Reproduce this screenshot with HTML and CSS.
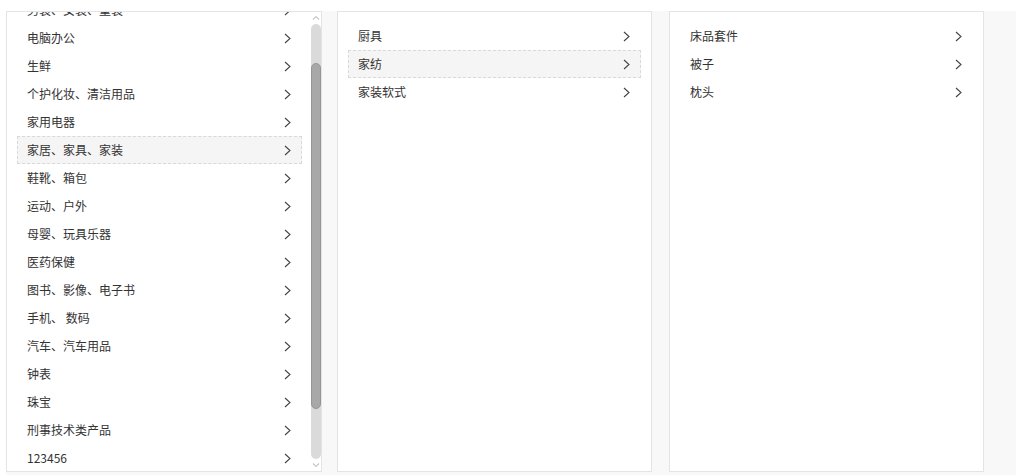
FILE: index.html
```html
<!DOCTYPE html>
<html lang="zh-CN">
<head>
<meta charset="utf-8">
<title>商品分类</title>
<link rel="stylesheet" href="styles.css">
</head>
<body>
<div class="cascader">
  <div class="panel panel-first">
    <ul class="cat-list cat-scroll">
      <li class="cat-item"><span>食品、饮料</span><svg class="arrow" viewBox="0 0 7 11"><polyline points="1,1 6,5.5 1,10"/></svg></li>
      <li class="cat-item"><span>男装、女装、童装</span><svg class="arrow" viewBox="0 0 7 11"><polyline points="1,1 6,5.5 1,10"/></svg></li>
      <li class="cat-item"><span>电脑办公</span><svg class="arrow" viewBox="0 0 7 11"><polyline points="1,1 6,5.5 1,10"/></svg></li>
      <li class="cat-item"><span>生鲜</span><svg class="arrow" viewBox="0 0 7 11"><polyline points="1,1 6,5.5 1,10"/></svg></li>
      <li class="cat-item"><span>个护化妆、清洁用品</span><svg class="arrow" viewBox="0 0 7 11"><polyline points="1,1 6,5.5 1,10"/></svg></li>
      <li class="cat-item"><span>家用电器</span><svg class="arrow" viewBox="0 0 7 11"><polyline points="1,1 6,5.5 1,10"/></svg></li>
      <li class="cat-item is-active"><span>家居、家具、家装</span><svg class="arrow" viewBox="0 0 7 11"><polyline points="1,1 6,5.5 1,10"/></svg></li>
      <li class="cat-item"><span>鞋靴、箱包</span><svg class="arrow" viewBox="0 0 7 11"><polyline points="1,1 6,5.5 1,10"/></svg></li>
      <li class="cat-item"><span>运动、户外</span><svg class="arrow" viewBox="0 0 7 11"><polyline points="1,1 6,5.5 1,10"/></svg></li>
      <li class="cat-item"><span>母婴、玩具乐器</span><svg class="arrow" viewBox="0 0 7 11"><polyline points="1,1 6,5.5 1,10"/></svg></li>
      <li class="cat-item"><span>医药保健</span><svg class="arrow" viewBox="0 0 7 11"><polyline points="1,1 6,5.5 1,10"/></svg></li>
      <li class="cat-item"><span>图书、影像、电子书</span><svg class="arrow" viewBox="0 0 7 11"><polyline points="1,1 6,5.5 1,10"/></svg></li>
      <li class="cat-item"><span>手机、 数码</span><svg class="arrow" viewBox="0 0 7 11"><polyline points="1,1 6,5.5 1,10"/></svg></li>
      <li class="cat-item"><span>汽车、汽车用品</span><svg class="arrow" viewBox="0 0 7 11"><polyline points="1,1 6,5.5 1,10"/></svg></li>
      <li class="cat-item"><span>钟表</span><svg class="arrow" viewBox="0 0 7 11"><polyline points="1,1 6,5.5 1,10"/></svg></li>
      <li class="cat-item"><span>珠宝</span><svg class="arrow" viewBox="0 0 7 11"><polyline points="1,1 6,5.5 1,10"/></svg></li>
      <li class="cat-item"><span>刑事技术类产品</span><svg class="arrow" viewBox="0 0 7 11"><polyline points="1,1 6,5.5 1,10"/></svg></li>
      <li class="cat-item"><span>123456</span><svg class="arrow" viewBox="0 0 7 11"><polyline points="1,1 6,5.5 1,10"/></svg></li>
      <li class="cat-item"><span>礼品箱包</span><svg class="arrow" viewBox="0 0 7 11"><polyline points="1,1 6,5.5 1,10"/></svg></li>
      <li class="cat-item"><span>酒类</span><svg class="arrow" viewBox="0 0 7 11"><polyline points="1,1 6,5.5 1,10"/></svg></li>
    </ul>
    <div class="scrollbar" aria-hidden="true">
      <svg class="sb-btn" viewBox="0 0 10 9"><polyline points="2,6 5,3 8,6"/></svg>
      <div class="sb-track"><div class="sb-thumb"></div></div>
      <svg class="sb-btn" viewBox="0 0 10 9"><polyline points="2,3 5,6 8,3"/></svg>
    </div>
  </div>

  <div class="panel panel-second">
    <ul class="cat-list">
      <li class="cat-item"><span>厨具</span><svg class="arrow" viewBox="0 0 7 11"><polyline points="1,1 6,5.5 1,10"/></svg></li>
      <li class="cat-item is-active"><span>家纺</span><svg class="arrow" viewBox="0 0 7 11"><polyline points="1,1 6,5.5 1,10"/></svg></li>
      <li class="cat-item"><span>家装软式</span><svg class="arrow" viewBox="0 0 7 11"><polyline points="1,1 6,5.5 1,10"/></svg></li>
    </ul>
  </div>

  <div class="panel panel-third">
    <ul class="cat-list">
      <li class="cat-item"><span>床品套件</span><svg class="arrow" viewBox="0 0 7 11"><polyline points="1,1 6,5.5 1,10"/></svg></li>
      <li class="cat-item"><span>被子</span><svg class="arrow" viewBox="0 0 7 11"><polyline points="1,1 6,5.5 1,10"/></svg></li>
      <li class="cat-item"><span>枕头</span><svg class="arrow" viewBox="0 0 7 11"><polyline points="1,1 6,5.5 1,10"/></svg></li>
    </ul>
  </div>
</div>
<script src="app.js"></script>
</body>
</html>
```

FILE: styles.css
```css
* {
  box-sizing: border-box;
}

html,
body {
  margin: 0;
  padding: 0;
  background: #fff;
}

body {
  font-family: "Noto Sans CJK SC", "Noto Sans", "Liberation Sans", sans-serif;
  font-size: 12px;
  color: #333;
  overflow: hidden;
}

.cascader {
  display: flex;
  align-items: flex-start;
  margin: 11px 0 0 6px;
  width: 1010px;
  height: 470px;
  background: #f8f8f8;
}

.panel {
  position: relative;
  height: 461px;
  background: #fff;
  border: 1px solid #e4e4e4;
}

.panel-first {
  width: 316px;
}

.panel-second {
  width: 315px;
  margin-left: 15px;
}

.panel-third {
  width: 315px;
  margin-left: 17px;
}

.cat-list {
  list-style: none;
  margin: 0;
  padding: 10px;
  height: 100%;
}

.cat-scroll {
  overflow-y: scroll;
  padding-right: 19px;
  scrollbar-width: none;
}

.cat-scroll::-webkit-scrollbar {
  display: none;
}

.cat-item {
  display: flex;
  align-items: center;
  justify-content: space-between;
  height: 28px;
  padding: 0 10px 0 9px;
  border: 1px dashed transparent;
  line-height: 26px;
  white-space: nowrap;
  cursor: pointer;
}

.cat-item.is-active {
  background: #f5f5f5;
  border-color: #d9d9d9;
}

.arrow {
  width: 7px;
  height: 11px;
  flex: none;
  fill: none;
  stroke: #444;
  stroke-width: 1.1;
}

/* slim custom scrollbar drawn over the list's right edge */
.scrollbar {
  position: absolute;
  top: 0;
  right: 0;
  bottom: 0;
  width: 10px;
  display: flex;
  flex-direction: column;
  align-items: stretch;
}

.sb-btn {
  width: 10px;
  height: 12px;
  flex: none;
  fill: none;
  stroke: #c8c8c8;
  stroke-width: 1.2;
}

.sb-track {
  flex: 1;
  display: flex;
  flex-direction: column;
  background: #dadada;
  border-radius: 5px;
  padding-top: 39px;
  padding-bottom: 50px;
}

.sb-thumb {
  flex: 1;
  background: #a8a8a8;
  border: 1px solid #959595;
  border-radius: 5px;
}
```

FILE: app.js
```js
document.querySelector('.cat-scroll').scrollTop = 54;
```
